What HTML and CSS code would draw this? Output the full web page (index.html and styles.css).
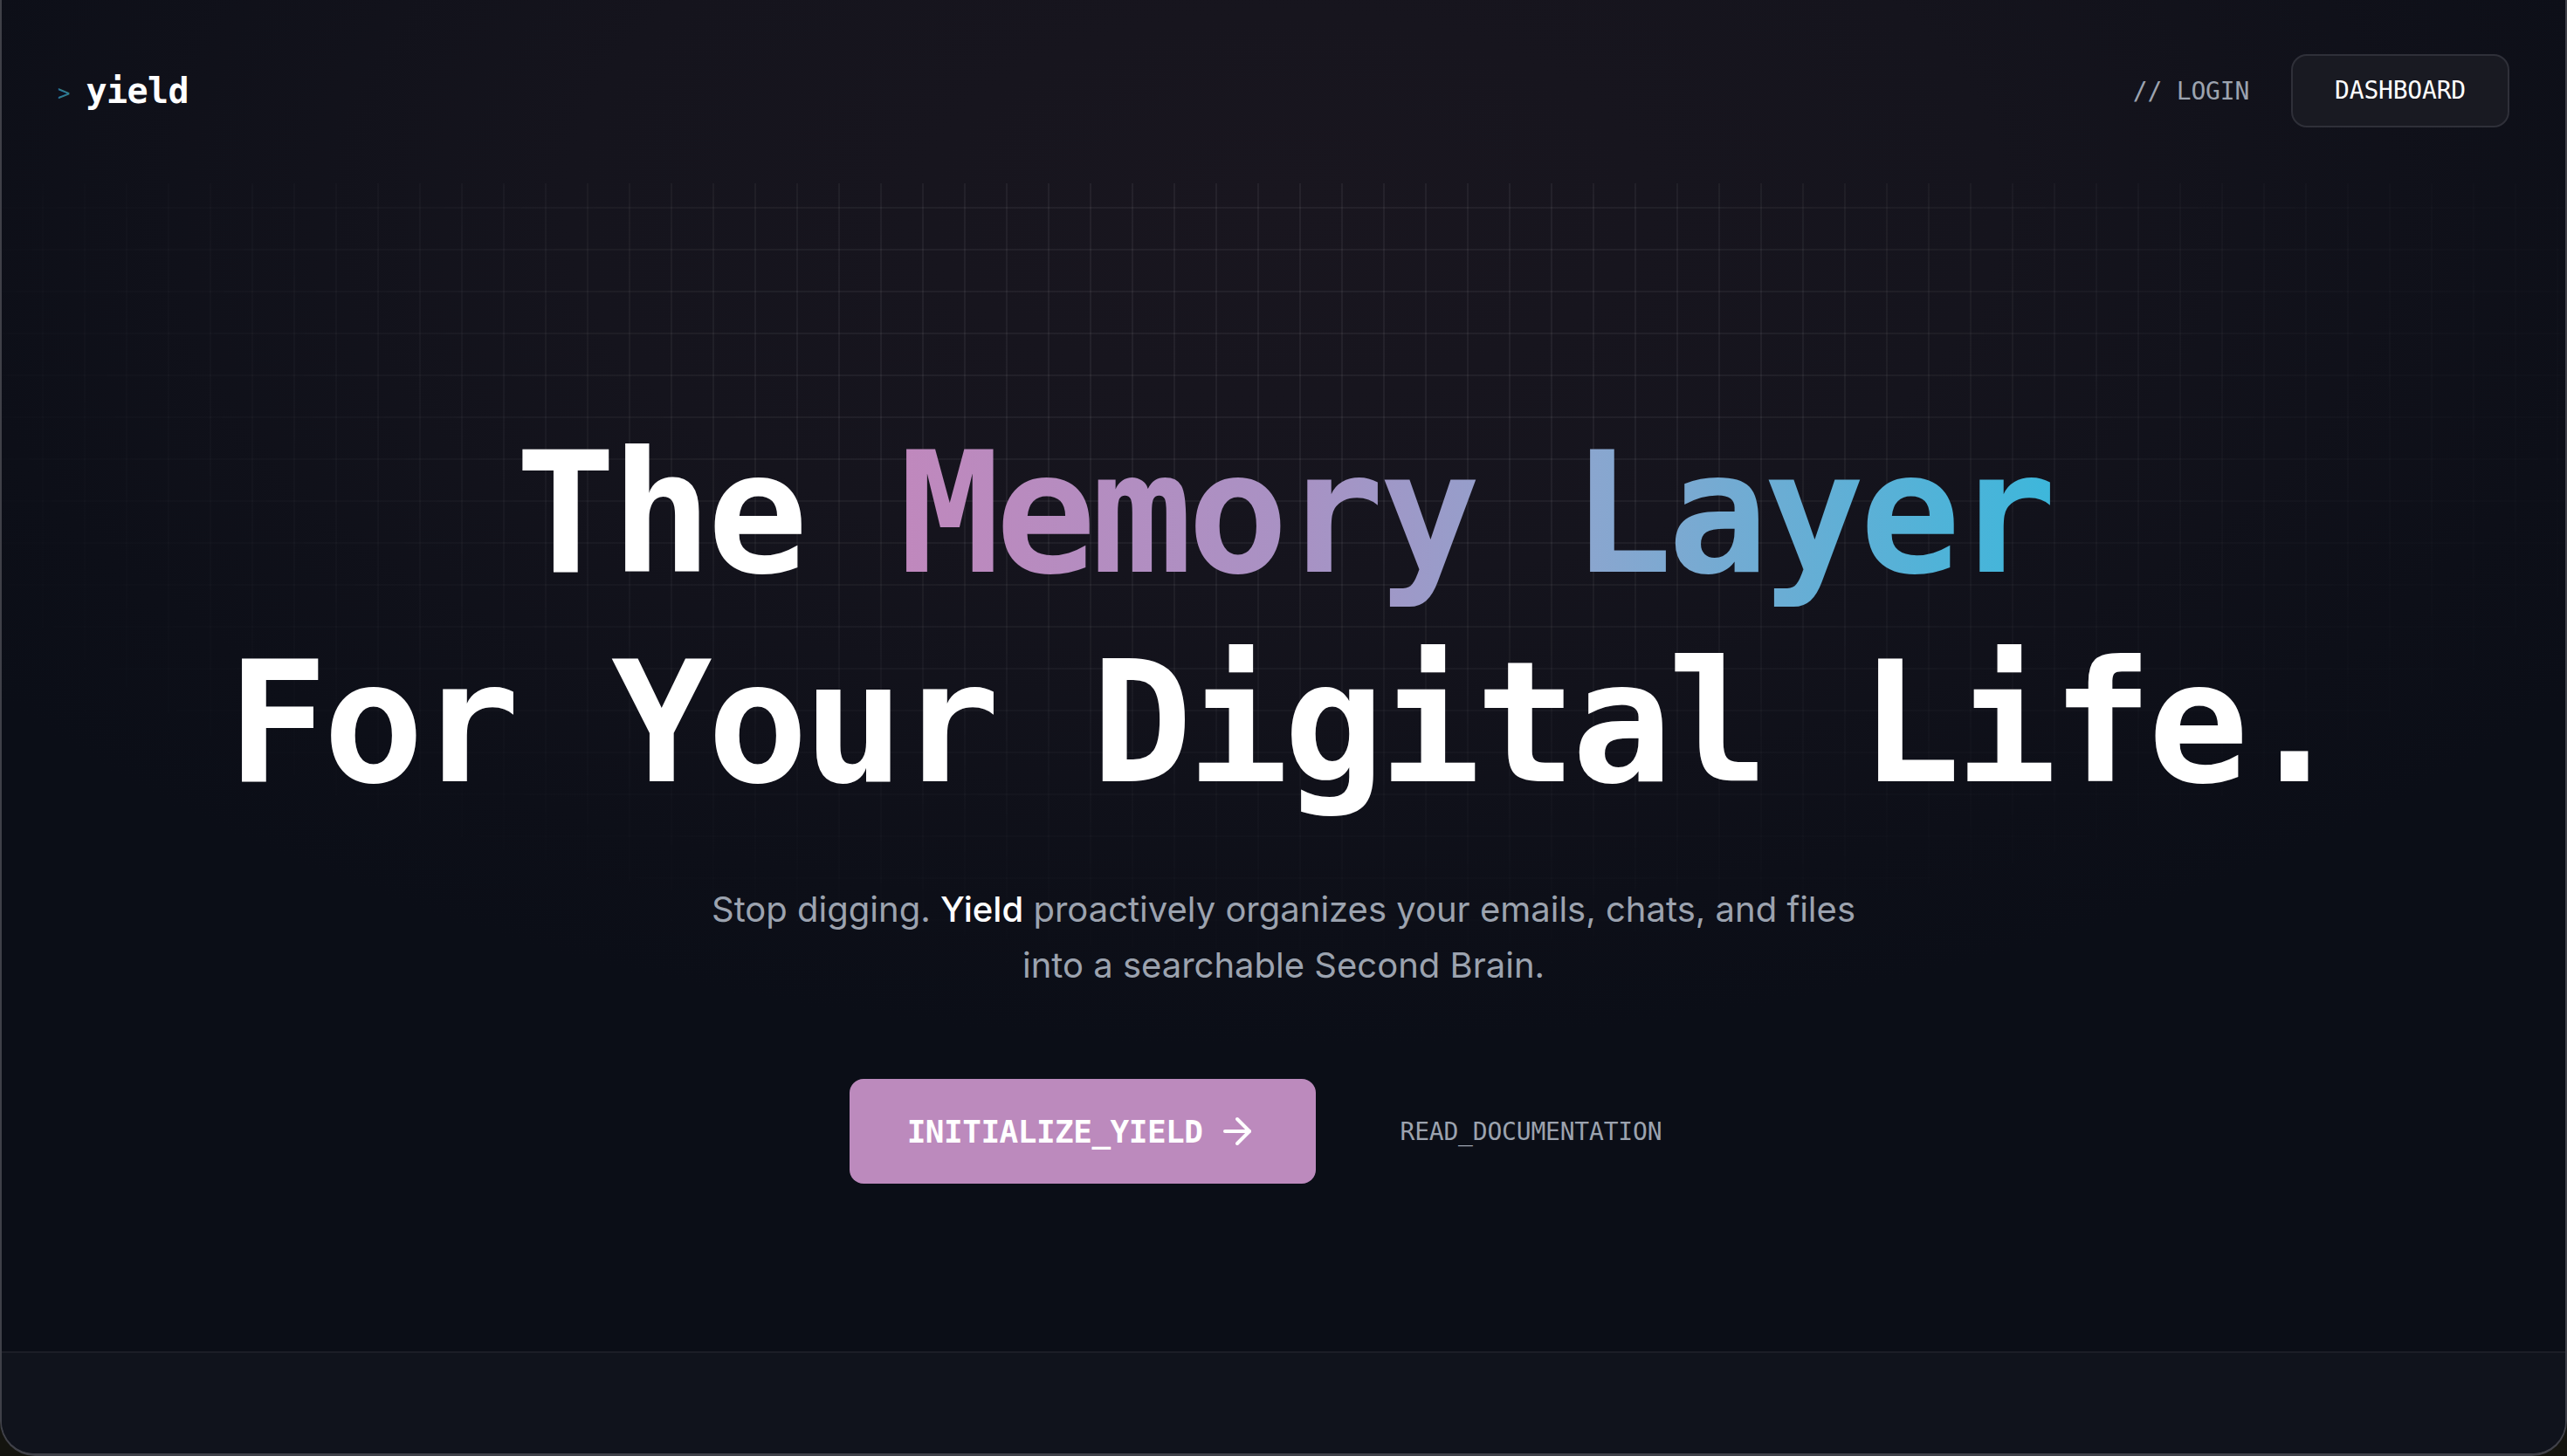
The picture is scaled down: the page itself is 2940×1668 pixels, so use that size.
FILE: index.html
```html
<!DOCTYPE html>
<html lang="en">
<head>
<meta charset="utf-8">
<title>Yield — The Memory Layer For Your Digital Life</title>
<link rel="stylesheet" href="styles.css">
</head>
<body>
<div class="window">
  <header class="nav">
    <a class="logo" href="#"><span class="prompt">&gt;</span><span class="logo-text">yield</span></a>
    <nav class="nav-links">
      <a class="login" href="#">// LOGIN</a>
      <a class="dash" href="#">DASHBOARD</a>
    </nav>
  </header>
  <main class="hero">
    <div class="grid-bg"></div>
    <div class="hero-inner">
      <h1 class="title">
        <span class="line">The <span class="grad">Memory Layer</span></span>
        <span class="line">For Your Digital Life.</span>
      </h1>
      <p class="lead">Stop digging. <strong>Yield</strong> proactively organizes your emails, chats, and files into a searchable Second Brain.</p>
      <div class="actions">
        <a class="btn-primary" href="#">INITIALIZE_YIELD
          <svg class="arrow" viewBox="0 0 24 24" fill="none" stroke="currentColor" stroke-width="2" stroke-linecap="round" stroke-linejoin="round"><path d="M5 12h14"/><path d="m12 5 7 7-7 7"/></svg>
        </a>
        <a class="btn-link" href="#">READ_DOCUMENTATION</a>
      </div>
    </div>
  </main>
  <footer class="foot"></footer>
</div>
</body>
</html>
```
FILE: styles.css
```css
* { box-sizing: border-box; }
html, body { margin: 0; padding: 0; }
body {
  background: #14140f;
  width: 2940px;
  height: 1668px;
  overflow: hidden;
}
a { text-decoration: none; color: inherit; }

.window {
  width: 2940px;
  height: 1668px;
  display: flex;
  flex-direction: column;
  border: 2px solid #3f4048;
  border-top: none;
  border-bottom-width: 3px;
  border-radius: 0 0 40px 40px;
  overflow: hidden;
  background:
    radial-gradient(ellipse 62% 58% at 50% 14%, #19161f 0%, #15141d 45%, #0d0f18 85%, #0b0e17 100%),
    #0b0e17;
  position: relative;
}

.nav {
  height: 210px;
  padding: 0 64px 2px;
  display: flex;
  align-items: center;
  justify-content: space-between;
  position: relative;
  z-index: 2;
}
.logo {
  display: flex;
  align-items: center;
  gap: 18px;
  font-family: "DejaVu Sans Mono", "Liberation Mono", monospace;
}
.prompt {
  font-size: 24px;
  line-height: 24px;
  color: #2f7c92;
  padding-top: 6px;
}
.logo-text {
  font-size: 40px;
  line-height: 48px;
  font-weight: 700;
  color: #ffffff;
  letter-spacing: -0.6px;
}
.nav-links {
  display: flex;
  align-items: center;
  gap: 48px;
  font-family: "DejaVu Sans Mono", "Liberation Mono", monospace;
  font-size: 28px;
}
.login {
  color: #9ca3af;
  letter-spacing: -0.2px;
}
.dash {
  color: #ffffff;
  padding: 20px 48px;
  line-height: 40px;
  border: 2px solid #2f3039;
  border-radius: 18px;
  background: #191a22;
  letter-spacing: -0.2px;
}

.hero {
  position: relative;
  height: 1338px;
  flex: none;
  padding-top: 259px;
}
.grid-bg {
  position: absolute;
  left: 0;
  right: 0;
  top: 0;
  height: 1000px;
  background-image:
    linear-gradient(to right, rgba(255,255,255,0.055) 2px, transparent 2px),
    linear-gradient(to bottom, rgba(255,255,255,0.05) 2px, transparent 2px);
  background-size: 48px 48px;
  background-position: -2px 27px;
  -webkit-mask-image: radial-gradient(ellipse 60% 75% at 50% 20%, #000 30%, rgba(0,0,0,0.4) 65%, transparent 100%);
  mask-image: radial-gradient(ellipse 60% 75% at 50% 20%, #000 30%, rgba(0,0,0,0.4) 65%, transparent 100%);
  pointer-events: none;
}
.hero-inner {
  position: relative;
  z-index: 1;
  display: flex;
  flex-direction: column;
  align-items: center;
  text-align: center;
}
.title {
  margin: 0;
  font-family: "DejaVu Sans Mono", "Liberation Mono", monospace;
  font-weight: 700;
  font-size: 192px;
  line-height: 1.25;
  letter-spacing: -5.6px;
  color: #ffffff;
  white-space: nowrap;
}
.line { display: block; }
.grad {
  background: linear-gradient(90deg, #c088bd 0%, #a892c4 35%, #8aa6cf 60%, #3db7db 100%);
  -webkit-background-clip: text;
  background-clip: text;
  color: transparent;
}
.lead {
  margin: 61px 0 0;
  max-width: 1344px;
  font-family: Inter, "Noto Sans", sans-serif;
  font-size: 40px;
  line-height: 1.6;
  color: #9ca3af;
}
.lead strong {
  color: #ffffff;
  font-weight: 500;
}
.actions {
  margin-top: 98px;
  display: flex;
  align-items: center;
  gap: 32px;
}
.btn-primary {
  height: 120px;
  padding: 0 66px;
  display: flex;
  align-items: center;
  gap: 16px;
  background: #bc8abd;
  border-radius: 16px;
  color: #ffffff;
  font-family: "DejaVu Sans Mono", "Liberation Mono", monospace;
  font-weight: 700;
  font-size: 36px;
  letter-spacing: -0.5px;
}
.arrow {
  width: 48px;
  height: 48px;
  flex: none;
}
.btn-link {
  padding: 0 64px;
  color: #9ca3af;
  font-family: "DejaVu Sans Mono", "Liberation Mono", monospace;
  font-size: 28px;
  letter-spacing: -0.2px;
}

.foot {
  flex: 1;
  border-top: 2px solid #1c1e27;
  background: #10131c;
}
```
